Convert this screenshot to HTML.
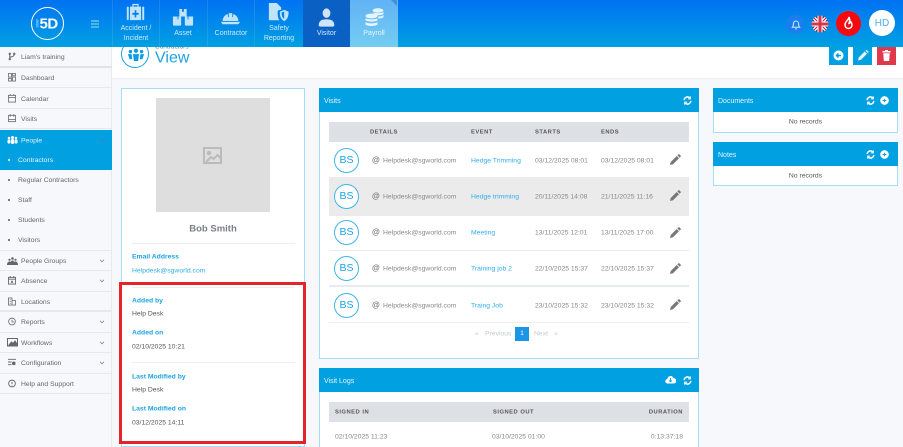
<!DOCTYPE html>
<html><head><meta charset="utf-8">
<style>
html,body{margin:0;padding:0;width:903px;height:447px;overflow:hidden}
#root{position:absolute;left:0;top:0;width:903px;height:447px;overflow:hidden;background:#f6f8fb;font-family:"Liberation Sans",sans-serif;font-size:7px;color:#555;filter:blur(.3px)}
.a{position:absolute}
.t{position:absolute;white-space:nowrap;line-height:10px;transform:translateY(1.5px)}
#hdr{left:0;top:0;width:903px;height:47px;background:linear-gradient(#0072f2,#00a1e2)}
.tile{position:absolute;top:0;height:47px;width:47px;border-left:1px solid rgba(255,255,255,.1);box-sizing:border-box;color:#cfeafc;text-align:center;font-size:7px;line-height:10px}
.tile span{position:absolute;left:0;right:0}
.tile svg{position:absolute}
.si{position:absolute;left:0;width:112px;height:20px;border-bottom:1px solid #e6e8ec;box-sizing:border-box;color:#666;font-size:6.8px;line-height:22px;padding-left:21px}
.si svg.i{position:absolute;left:8px;top:5px}
.si svg.c{position:absolute;left:99px;top:8px}
.sub{position:absolute;left:0;width:112px;height:20px;line-height:22px;padding-left:18px;box-sizing:border-box;color:#666;font-size:6.8px}
.sub:before{content:"";position:absolute;left:8px;top:9px;width:2px;height:2px;border-radius:2px;background:#555}
.panel{position:absolute;background:#fff;border:1px solid #a5dcf6;box-sizing:border-box}
.ph{position:absolute;background:#00a0e1;color:#e4f5fd;font-size:7px;line-height:11px;padding:8px 0 0 5px;box-sizing:border-box;height:24px}
.lab,.val,.gr,.bl,.th{position:absolute;line-height:10px;white-space:nowrap;transform:translateY(1.5px)}
.lab{color:#1ba3e3;font-weight:bold;font-size:6.8px}
.val{color:#555;font-size:6.8px}
.row{position:absolute;left:329px;width:360px;height:36px;border-bottom:1px solid #e9ecef;box-sizing:border-box}
.bs{position:absolute;left:334px;width:25px;height:25px;border:1px solid #3fb3ea;border-radius:50%;box-sizing:border-box;color:#1ba3e3;font-size:10.5px;line-height:22px;text-align:center;background:#fff}
.gr{color:#888;font-size:6.8px}
.at{font-size:8px;font-weight:bold;color:#777;left:372px}
.bl{color:#30aee8;font-size:6.8px}
.th{color:#555;font-weight:bold;font-size:5.8px;letter-spacing:.5px}
.btn{position:absolute;top:47px;width:19px;height:18px;background:#00a0e1}
</style></head><body>
<div id="root">

<!-- page title strip -->
<div class="a" style="left:112px;top:47px;width:791px;height:31px;background:#fff;border-bottom:1px solid #eceef2"></div>
<div class="a" style="left:121px;top:40px;width:28px;height:28px;border:1px solid #1ba3e3;border-radius:50%;box-sizing:border-box;background:#fff"></div>
<svg class="a" style="left:127px;top:48px" width="18" height="14" viewBox="0 0 21 16" fill="#0d9fe0"><circle cx="10.500" cy="3" r="2.500"/><circle cx="4" cy="4" r="2"/><circle cx="17" cy="4" r="2"/><path d="M7 7h7l-1 8H8zM1 7h4.500l.5 6H3zM15.500 7H20l-2 6h-3z"/></svg>
<div class="t" style="left:155px;top:41px;font-size:6.5px;color:#777">Contractors</div>
<div class="t" style="left:155px;top:48px;font-size:16px;line-height:18px;color:#1ba3e3">View</div>
<div class="btn" style="left:829px"><svg width="19" height="18" viewBox="0 0 19 18"><circle cx="9.500" cy="8.500" r="5" fill="#fff"/><path d="M12 8.500H8M9.500 6.500l-2 2 2 2" stroke="#00a0e1" stroke-width="1.500" fill="none"/></svg></div>
<div class="btn" style="left:853px"><svg width="19" height="18" viewBox="0 0 19 18" fill="#e8f7fe"><path d="M5 13.500l.7-3 6-6 2.300 2.300-6 6zM12.500 3.700l1-1 2.300 2.300-1 1z"/></svg></div>
<div class="btn" style="left:877px;background:#e0384c"><svg width="19" height="18" viewBox="0 0 19 18" fill="#fff"><path d="M5.500 4h8v1.500h-8zM8 3h3v1H8zM6.300 6.300h6.400l-.5 7.700H6.800z"/></svg></div>

<!-- header -->
<div class="a" id="hdr"></div>
<div class="a" style="left:31px;top:7px;width:33px;height:33px;border:1.500px solid #fff;border-radius:50%;box-sizing:border-box"></div>
<div class="t" style="left:39.500px;top:15px;font-size:15px;line-height:15px;font-weight:bold;color:#fff;letter-spacing:-.5px">5D</div>
<div class="a" style="left:34px;top:21px;width:8px;height:5px;color:#dff3fd;font-size:3.500px;line-height:5px;transform:rotate(-90deg);text-align:center">SGW</div>
<div class="a" style="left:91px;top:20px;width:8px;height:1.500px;background:#4db6ee;box-shadow:0 3px 0 #4db6ee,0 6px 0 #4db6ee"></div>

<div class="tile" style="left:112px"><svg style="left:13px;top:3px" width="19" height="18" preserveAspectRatio="none" viewBox="0 0 24 20" fill="#bfe4fa"><path d="M8 1h8v3h-1.500V2.500h-5V4H8z"/><rect x="1" y="4" width="2.500" height="15" rx="1"/><rect x="20.500" y="4" width="2.500" height="15" rx="1"/><path d="M5 4h14v15H5zM11 8v3H8v2h3v3h2v-3h3v-2h-3V8z" fill-rule="evenodd"/></svg><span style="top:24px">Accident /</span><span style="top:34px">Incident</span></div>
<div class="tile" style="left:159px"><svg style="left:12px;top:8px" width="22" height="19" preserveAspectRatio="none" viewBox="0 0 24 20" fill="#bfe4fa"><path d="M8 1h3v3h2V1h3v8H8zM1 9h5v3h1V9h3v8.500a1 1 0 0 1-1 1H2a1 1 0 0 1-1-1zM14 9h3v3h1V9h5v8.500a1 1 0 0 1-1 1h-7a1 1 0 0 1-1-1z"/></svg><span style="top:29px">Asset</span></div>
<div class="tile" style="left:207px"><svg style="left:12px;top:10px" width="21" height="15" preserveAspectRatio="none" viewBox="0 0 24 19" fill="#bfe4fa"><path d="M3 14c0-5 3-8 6-9v4h1V4h4v5h1V5c3 1 6 4 6 9zM1 15h22l-2 3H3z"/></svg><span style="top:29px">Contractor</span></div>
<div class="tile" style="left:254px;width:49px"><svg style="left:13px;top:3px" width="21" height="19" preserveAspectRatio="none" viewBox="0 0 24 22" fill="#bfe4fa"><path d="M1 0h9l5 5v3c-3 0-4 1-4 2 0 4 0 7 2 10H1z"/><path d="M18.500 8l5 2c0 5-1 9-5 11-4-2-5-6-5-11zm0 2l-3 1c0 3 1 6 3 7.500z" fill-rule="evenodd"/></svg><span style="top:24px">Safety</span><span style="top:34px">Reporting</span></div>
<div class="tile" style="left:303px;background:#0a60c3;border:0;width:47px"><svg style="left:15px;top:8px" width="17" height="19" preserveAspectRatio="none" viewBox="0 0 24 22" fill="#cfe4f6"><circle cx="12" cy="6" r="5.500"/><path d="M1 20c0-5 4-7 11-7s11 2 11 7c0 1-1 1.500-2 1.500H3c-1 0-2-.5-2-1.500z"/></svg><span style="top:29px">Visitor</span></div>
<div class="tile" style="left:350px;width:48px;background:linear-gradient(#62b2f4,#74cdf2);border:0;color:#e6f6fd"><svg style="left:15px;top:8px" width="19" height="19" viewBox="0 0 19 19" fill="#e6f5fd"><ellipse cx="13" cy="2.500" rx="5.500" ry="2.200"/><path d="M7.500 4c1.500 1.500 9.500 1.500 11 0v2c-1.500 1.500-7 1.500-8.500 1zM13 8.500c2.500 0 4.500-.5 5.500-1.500v2c-1 1.200-3 1.500-5 1.500z"/><ellipse cx="6.500" cy="8" rx="6" ry="2.400"/><path d="M.5 10c1.500 1.800 10.500 1.800 12 0v2.300c-1.500 1.800-10.500 1.800-12 0zM.5 14c1.500 1.800 10.500 1.800 12 0v2.500c-1.500 2-10.500 2-12 0z"/></svg><span style="top:29px">Payroll</span></div>
<div class="a" style="left:391px;top:0;width:0;height:0;border-top:6px solid #3f8fdf;border-left:6px solid transparent"></div>

<div class="a" style="left:786px;top:15px;width:19px;height:19px;border-radius:50%;background:#1a7fec"></div>
<svg class="a" style="left:791px;top:19px" width="10" height="11" viewBox="0 0 11 12" fill="none" stroke="#cfeafc" stroke-width="1.100"><path d="M1.500 9c1-1 1.200-2 1.200-4a2.800 2.800 0 0 1 5.600 0c0 2 .2 3 1.200 4zM4.500 10.800h2"/></svg>
<svg class="a" style="left:811px;top:15px" width="18" height="18" viewBox="0 0 18 18"><defs><clipPath id="cf"><circle cx="9" cy="9" r="8.500"/></clipPath></defs><g clip-path="url(#cf)"><rect width="18" height="18" fill="#2a4a80"/><path d="M0 0L18 18M18 0L0 18" stroke="#fff" stroke-width="3.500"/><path d="M0 0L18 18M18 0L0 18" stroke="#d8344a" stroke-width="1.200"/><path d="M9 0v18M0 9h18" stroke="#fff" stroke-width="5"/><path d="M9 0v18M0 9h18" stroke="#d8344a" stroke-width="3"/></g></svg>
<div class="a" style="left:836px;top:11px;width:25px;height:25px;border-radius:50%;background:#f50a0f;box-shadow:0 0 0 1px #1a82ea"></div>
<svg class="a" style="left:843px;top:16px" width="11" height="14" viewBox="0 0 11 14" fill="none" stroke="#fff" stroke-width="1.500"><path d="M6 1c0 3-4 4-4 8a3.500 3.500 0 0 0 7 0c0-2-1-3-1.500-3.500 0 1-1 2-1.500 2C6.500 6 7 3 6 1z"/></svg>
<div class="a" style="left:869px;top:10px;width:26px;height:26px;border-radius:50%;background:#fff;color:#4cb0e8;font-size:10px;line-height:27px;text-align:center">HD</div>

<!-- sidebar -->
<div class="a" style="left:0;top:47px;width:112px;height:400px;background:#f6f8fb;border-right:1px solid #e8eaee;box-sizing:border-box"></div>
<div class="si" style="top:47px;height:21px;border-bottom:2px solid #dfe2e6"><svg class="i" width="8" height="9" viewBox="0 0 9 10" fill="none" stroke="#666" stroke-width="1.100"><circle cx="2" cy="2" r=".8"/><circle cx="2" cy="8" r=".8"/><circle cx="7" cy="2" r=".8"/><path d="M2 3v4M7 3c0 2-3 2-5 3"/></svg>Liam's training</div>
<div class="si" style="top:68px"><svg class="i" width="8" height="9" viewBox="0 0 9 10" fill="none" stroke="#777" stroke-width="1"><rect x=".5" y=".5" width="3.500" height="4"/><rect x="5" y=".5" width="3.500" height="2.500"/><rect x=".5" y="6" width="3.500" height="3"/><rect x="5" y="4.500" width="3.500" height="4.500"/></svg>Dashboard</div>
<div class="si" style="top:89px"><svg class="i" width="8" height="9" viewBox="0 0 9 10" fill="none" stroke="#777" stroke-width="1"><rect x=".5" y="1.500" width="8" height="7.500"/><path d="M.5 4h8M2.500 0v2M6.500 0v2"/></svg>Calendar</div>
<div class="si" style="top:109px"><svg class="i" width="8" height="9" viewBox="0 0 9 10" fill="none" stroke="#777" stroke-width="1"><rect x=".5" y="1.500" width="8" height="7"/><path d="M.5 6h8M2.500 0v3M6.500 0v3"/></svg>Visits</div>
<div class="a" style="left:0;top:130px;width:112px;height:40px;background:#00a0e1"></div>
<div class="t" style="left:21px;top:134.500px;font-size:6.8px;color:#e4f5fd">People</div>
<svg class="a" style="left:7px;top:136px" width="11" height="8" viewBox="0 0 11 8" fill="#fff"><circle cx="5.500" cy="1.500" r="1.500"/><circle cx="2" cy="2" r="1.300"/><circle cx="9" cy="2" r="1.300"/><rect x="4" y="3" width="3" height="5" rx="1"/><rect x=".5" y="3.500" width="3" height="4" rx="1"/><rect x="7.500" y="3.500" width="3" height="4" rx="1"/></svg>
<svg class="a" style="left:99px;top:139px" width="6" height="4" viewBox="0 0 7 5" fill="none" stroke="#4f7f9f" stroke-width="1"><path d="M1 1l2.500 2.500L6 1"/></svg>
<div class="sub" style="top:150px;color:#eaf7fe"><span style="position:absolute;left:8px;top:9px;width:2px;height:2px;background:#fff;border-radius:2px"></span>Contractors</div>
<div class="sub" style="top:170px">Regular Contractors</div>
<div class="sub" style="top:190px">Staff</div>
<div class="sub" style="top:210px">Students</div>
<div class="sub" style="top:230px">Visitors</div>
<div class="a" style="left:0;top:250px;width:111px;height:1px;background:#e6e8ec"></div>
<div class="si" style="top:251px"><svg class="i" style="left:7px;top:6px" width="11" height="8" viewBox="0 0 11 8" fill="#666"><circle cx="5.500" cy="1.500" r="1.300"/><circle cx="2.500" cy="2.800" r="1.100"/><circle cx="8.500" cy="2.800" r="1.100"/><path d="M0 8c0-2 1-3.500 2.500-3.500.5 0 1 .2 1.200.5.4-1 1-1.500 1.800-1.500s1.400.5 1.800 1.500c.2-.3.700-.5 1.200-.5C10 4.500 11 6 11 8z"/></svg><svg class="c" width="6" height="4" viewBox="0 0 7 5" fill="none" stroke="#888" stroke-width="1"><path d="M1 1l2.500 2.500L6 1"/></svg>People Groups</div>
<div class="si" style="top:271px;height:21px"><svg class="i" width="8" height="9" viewBox="0 0 9 10" fill="none" stroke="#666" stroke-width="1"><rect x=".5" y="1.500" width="8" height="7.500"/><path d="M.5 3.500h8M2.500 0v2M6.500 0v2M3.500 5.500l2 2M5.500 5.500l-2 2"/></svg><svg class="c" width="6" height="4" viewBox="0 0 7 5" fill="none" stroke="#888" stroke-width="1"><path d="M1 1l2.500 2.500L6 1"/></svg>Absence</div>
<div class="si" style="top:292px;border-bottom:2px solid #e6e8ec"><svg class="i" width="8" height="9" viewBox="0 0 9 10" fill="none" stroke="#777" stroke-width="1"><path d="M.5 9V1h4v8M4.500 4h4v5M0 9h9M2 3h1M2 5h1M2 7h1"/></svg>Locations</div>
<div class="si" style="top:312px;height:21px"><svg class="i" width="8" height="9" viewBox="0 0 9 10" fill="none" stroke="#777" stroke-width="1"><circle cx="4.500" cy="5" r="3.800"/><path d="M4.500 3v2.500H7"/></svg><svg class="c" width="6" height="4" viewBox="0 0 7 5" fill="none" stroke="#888" stroke-width="1"><path d="M1 1l2.500 2.500L6 1"/></svg>Reports</div>
<div class="si" style="top:333px"><svg class="i" style="left:7px" width="11" height="9" viewBox="0 0 11 9" fill="none" stroke="#666" stroke-width="1"><rect x=".5" y=".5" width="10" height="7.500"/><path d="M2 7l2.500-3 1.500 1.500L8 3l2 3v1.500H2z" fill="#666"/></svg><svg class="c" width="6" height="4" viewBox="0 0 7 5" fill="none" stroke="#888" stroke-width="1"><path d="M1 1l2.500 2.500L6 1"/></svg>Workflows</div>
<div class="si" style="top:353px;height:21px"><svg class="i" width="8" height="8" viewBox="0 0 9 9" fill="none" stroke="#666" stroke-width="1"><path d="M0 1.500h9M0 4.500h4M0 7.500h4"/><circle cx="6.500" cy="6" r="1.500" fill="#666"/></svg><svg class="c" width="6" height="4" viewBox="0 0 7 5" fill="none" stroke="#888" stroke-width="1"><path d="M1 1l2.500 2.500L6 1"/></svg>Configuration</div>
<div class="si" style="top:374px"><svg class="i" width="8" height="9" viewBox="0 0 9 10" fill="none" stroke="#666" stroke-width="1"><circle cx="4.500" cy="5" r="3.800"/><path d="M4.500 3.200v2.400M4.500 6.500v.8"/></svg>Help and Support</div>

<!-- profile panel -->
<div class="panel" style="left:121px;top:88px;width:184px;height:359px"></div>
<div class="a" style="left:156px;top:98px;width:114px;height:114px;background:#dedede"></div>
<svg class="a" style="left:203px;top:147px" width="19" height="17" viewBox="0 0 19 17" fill="none" stroke="#bbb" stroke-width="2"><rect x="1" y="1" width="17" height="15"/><circle cx="6" cy="6" r="1.300" fill="#bbb"/><path d="M3 15l5-5 2.500 2 4-4 3 3"/></svg>
<div class="t" style="left:121px;width:184px;text-align:center;top:222px;font-size:9.500px;line-height:11px;font-weight:bold;color:#7a7f87">Bob Smith</div>
<div class="a" style="left:132px;top:243px;width:163px;height:1px;background:#eee"></div>
<div class="lab" style="left:132px;top:251px">Email Address</div>
<div class="t" style="left:132px;top:265px;font-size:6.8px;color:#30aee8">Helpdesk@sgworld.com</div>
<div class="a" style="left:132px;top:287px;width:163px;height:1px;background:#eee"></div>
<div class="lab" style="left:132px;top:294.500px">Added by</div>
<div class="val" style="left:132px;top:308px">Help Desk</div>
<div class="lab" style="left:132px;top:327px">Added on</div>
<div class="val" style="left:132px;top:341px">02/10/2025 10:21</div>
<div class="a" style="left:132px;top:362px;width:163px;height:1px;background:#eee"></div>
<div class="lab" style="left:132px;top:370.500px">Last Modified by</div>
<div class="val" style="left:132px;top:384px">Help Desk</div>
<div class="lab" style="left:132px;top:403px">Last Modified on</div>
<div class="val" style="left:132px;top:416.500px">03/12/2025 14:11</div>
<div class="a" style="left:119px;top:282px;width:187px;height:162px;border:3px solid #e3242b;box-sizing:border-box"></div>

<!-- visits panel -->
<div class="panel" style="left:319px;top:88px;width:380px;height:271px"></div>
<div class="ph" style="left:319px;top:88px;width:380px">Visits</div>
<svg class="a" style="left:683px;top:96px" width="9" height="9" viewBox="0 0 10 11" fill="none" stroke="#fff" stroke-width="1.800"><path d="M1 5a4 4 0 0 1 7-2.500M9 6a4 4 0 0 1-7 2.500"/><path d="M8.500 .5v3h-3M1.500 10.500v-3h3" stroke-width="1.200"/></svg>
<div class="a" style="left:329px;top:122px;width:360px;height:20px;background:#dde0e5"></div>
<div class="th" style="left:370px;top:126px">DETAILS</div><div class="th" style="left:471px;top:126px">EVENT</div><div class="th" style="left:535px;top:126px">STARTS</div><div class="th" style="left:601px;top:126px">ENDS</div>

<div class="row" style="top:142px"></div>
<div class="row" style="top:178px;height:38px;background:#ebebeb;border:0"></div>
<div class="row" style="top:216px;height:35px"></div>
<div class="row" style="top:251px;height:36px;border-bottom:2px solid #e9ecef"></div>
<div class="row" style="top:287px;height:36px;border-bottom:1px solid #eee"></div>

<div class="bs" style="top:148px">BS</div>
<div class="gr at" style="top:153.500px">@</div><div class="gr" style="left:383px;top:154.500px">Helpdesk@sgworld.com</div><div class="bl" style="left:471px;top:154.500px">Hedge Trimming</div><div class="gr" style="left:535px;top:154.500px">03/12/2025 08:01</div><div class="gr" style="left:601px;top:154.500px">03/12/2025 08:01</div>
<div class="bs" style="top:184px">BS</div>
<div class="gr at" style="top:189.500px">@</div><div class="gr" style="left:383px;top:190.500px">Helpdesk@sgworld.com</div><div class="bl" style="left:471px;top:190.500px">Hedge trimming</div><div class="gr" style="left:535px;top:190.500px">20/11/2025 14:08</div><div class="gr" style="left:601px;top:190.500px">21/11/2025 11:16</div>
<div class="bs" style="top:220px">BS</div>
<div class="gr at" style="top:226px">@</div><div class="gr" style="left:383px;top:227px">Helpdesk@sgworld.com</div><div class="bl" style="left:471px;top:227px">Meeting</div><div class="gr" style="left:535px;top:227px">13/11/2025 12:01</div><div class="gr" style="left:601px;top:227px">13/11/2025 17:00</div>
<div class="bs" style="top:256px">BS</div>
<div class="gr at" style="top:262px">@</div><div class="gr" style="left:383px;top:263px">Helpdesk@sgworld.com</div><div class="bl" style="left:471px;top:263px">Training job 2</div><div class="gr" style="left:535px;top:263px">22/10/2025 15:37</div><div class="gr" style="left:601px;top:263px">22/10/2025 15:37</div>
<div class="bs" style="top:293px">BS</div>
<div class="gr at" style="top:299px">@</div><div class="gr" style="left:383px;top:300px">Helpdesk@sgworld.com</div><div class="bl" style="left:471px;top:300px">Traing Job</div><div class="gr" style="left:535px;top:300px">23/10/2025 15:32</div><div class="gr" style="left:601px;top:300px">23/10/2025 15:32</div>

<svg class="a" style="left:670px;top:154px" width="11" height="11" viewBox="0 0 12 12" fill="#777"><path d="M0 12l.8-3.300 6.500-6.500 2.500 2.500-6.500 6.500zM8 1.500l1-1a1 1 0 0 1 1.400 0l1.100 1.100a1 1 0 0 1 0 1.400l-1 1z"/></svg>
<svg class="a" style="left:670px;top:190px" width="11" height="11" viewBox="0 0 12 12" fill="#777"><path d="M0 12l.8-3.300 6.500-6.500 2.500 2.500-6.500 6.500zM8 1.500l1-1a1 1 0 0 1 1.400 0l1.100 1.100a1 1 0 0 1 0 1.400l-1 1z"/></svg>
<svg class="a" style="left:670px;top:227px" width="11" height="11" viewBox="0 0 12 12" fill="#777"><path d="M0 12l.8-3.300 6.500-6.500 2.500 2.500-6.500 6.500zM8 1.500l1-1a1 1 0 0 1 1.400 0l1.100 1.100a1 1 0 0 1 0 1.400l-1 1z"/></svg>
<svg class="a" style="left:670px;top:263px" width="11" height="11" viewBox="0 0 12 12" fill="#777"><path d="M0 12l.8-3.300 6.500-6.500 2.500 2.500-6.500 6.500zM8 1.500l1-1a1 1 0 0 1 1.400 0l1.100 1.100a1 1 0 0 1 0 1.400l-1 1z"/></svg>
<svg class="a" style="left:670px;top:299px" width="11" height="11" viewBox="0 0 12 12" fill="#777"><path d="M0 12l.8-3.300 6.500-6.500 2.500 2.500-6.500 6.500zM8 1.500l1-1a1 1 0 0 1 1.400 0l1.100 1.100a1 1 0 0 1 0 1.400l-1 1z"/></svg>

<div class="t" style="left:475px;top:328px;font-size:6.8px;color:#c4c8cd">«</div>
<div class="t" style="left:485px;top:328px;font-size:6.8px;color:#c4c8cd">Previous</div>
<div class="a" style="left:515px;top:327px;width:14px;height:14px;background:#1b95e6;color:#fff;font-size:6.8px;line-height:14px;text-align:center">1</div>
<div class="t" style="left:534px;top:328px;font-size:6.8px;color:#c4c8cd">Next</div>
<div class="t" style="left:554px;top:328px;font-size:6.8px;color:#c4c8cd">»</div>

<!-- visit logs -->
<div class="panel" style="left:319px;top:368px;width:380px;height:85px"></div>
<div class="ph" style="left:319px;top:368px;width:380px">Visit Logs</div>
<svg class="a" style="left:665px;top:375px" width="11" height="9" viewBox="0 0 12 10"><path d="M3 9.500a2.500 2.500 0 0 1-.5-5A3.500 3.500 0 0 1 9.300 3.500 3 3 0 0 1 9.500 9.500z" fill="#fff"/><path d="M6 3.500v4M4.500 6L6 7.500 7.500 6" stroke="#00a0e1" fill="none"/></svg>
<svg class="a" style="left:683px;top:376px" width="9" height="9" viewBox="0 0 10 11" fill="none" stroke="#fff" stroke-width="1.800"><path d="M1 5a4 4 0 0 1 7-2.500M9 6a4 4 0 0 1-7 2.500"/><path d="M8.500 .5v3h-3M1.500 10.500v-3h3" stroke-width="1.200"/></svg>
<div class="a" style="left:329px;top:402px;width:360px;height:20px;background:#dde0e5"></div>
<div class="th" style="left:335px;top:406px">SIGNED IN</div><div class="th" style="left:493px;top:406px">SIGNED OUT</div><div class="th" style="right:220px;top:406px">DURATION</div>
<div class="gr" style="left:335px;top:430.500px">02/10/2025 11:23</div><div class="gr" style="left:492px;top:430.500px">03/10/2025 01:00</div><div class="gr" style="right:220px;top:430.500px">0:13:37:18</div>

<!-- right panels -->
<div class="panel" style="left:713px;top:88px;width:185px;height:45px"></div>
<div class="ph" style="left:713px;top:88px;width:185px">Documents</div>
<svg class="a" style="left:866px;top:96px" width="9" height="9" viewBox="0 0 10 11" fill="none" stroke="#fff" stroke-width="1.800"><path d="M1 5a4 4 0 0 1 7-2.500M9 6a4 4 0 0 1-7 2.500"/><path d="M8.500 .5v3h-3M1.500 10.500v-3h3" stroke-width="1.200"/></svg>
<svg class="a" style="left:880px;top:96px" width="9" height="9" viewBox="0 0 10 10"><circle cx="5" cy="5" r="4.800" fill="#fff"/><path d="M3 5h4M5 3v4" stroke="#00a0e1" fill="none"/></svg>
<div class="t" style="left:713px;width:185px;text-align:center;top:116px;font-size:6.8px;color:#555">No records</div>
<div class="panel" style="left:713px;top:142px;width:185px;height:44px"></div>
<div class="ph" style="left:713px;top:142px;width:185px">Notes</div>
<svg class="a" style="left:866px;top:150px" width="9" height="9" viewBox="0 0 10 11" fill="none" stroke="#fff" stroke-width="1.800"><path d="M1 5a4 4 0 0 1 7-2.500M9 6a4 4 0 0 1-7 2.500"/><path d="M8.500 .5v3h-3M1.500 10.500v-3h3" stroke-width="1.200"/></svg>
<svg class="a" style="left:880px;top:150px" width="9" height="9" viewBox="0 0 10 10"><circle cx="5" cy="5" r="4.800" fill="#fff"/><path d="M3 5h4M5 3v4" stroke="#00a0e1" fill="none"/></svg>
<div class="t" style="left:713px;width:185px;text-align:center;top:169.500px;font-size:6.8px;color:#555">No records</div>

</div>
</body></html>
